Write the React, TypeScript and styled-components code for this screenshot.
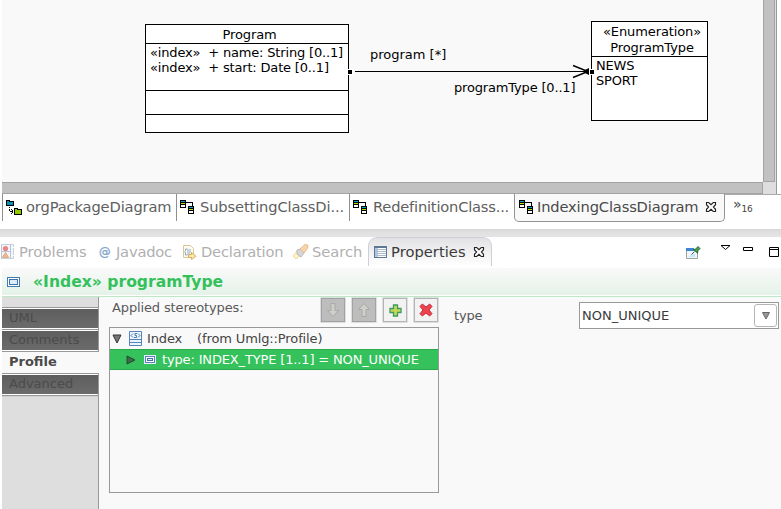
import React from "react";
import styled, { createGlobalStyle, css } from "styled-components";

const GlobalStyle = createGlobalStyle`
  * { box-sizing: border-box; }
  body {
    margin: 0;
    background: #fff;
    font-family: "DejaVu Sans", sans-serif;
    font-size: 13px;
    overflow: hidden;
  }
  svg { display: block; flex: none; }
`;

const Window = styled.div`
  width: 781px;
  height: 509px;
  overflow: hidden;
  display: flex;
  flex-direction: column;
`;

/* ---------- Diagram editor ---------- */

const Editor = styled.section`
  display: grid;
  grid-template-columns: 761px 12px;
  grid-template-rows: 182px 12px;
  width: 776px;
  margin-left: 2px;
  height: 194px;
`;

const Canvas = styled.div`
  position: relative;
  background: #f9f9f9;
  overflow: hidden;
`;

const VerticalTrack = styled.div`
  background: #c1c1c1;
  border: solid #a3a3a3;
  border-width: 0 1px 1px 1px;
  box-shadow: 1px 0 #dedede, 2px 0 #999;
`;

const HorizontalTrack = styled.div`
  background: #c1c1c1;
  border: solid #a3a3a3;
  border-width: 1px 1px 1px 0;
`;

const TrackCorner = styled.div`
  background: #dedede;
  box-shadow: 1px 0 #dedede, 2px 0 #999;
`;

const ClassNode = styled.div<{ $x: number; $y: number; $w: number; $h: number }>`
  position: absolute;
  left: ${(p) => p.$x}px;
  top: ${(p) => p.$y}px;
  width: ${(p) => p.$w}px;
  height: ${(p) => p.$h}px;
  display: flex;
  flex-direction: column;
  background: #fff;
  border: 1px solid #000;
`;

const NodeTitle = styled.div<{ $h: number; $line: number; $indent: number }>`
  height: ${(p) => p.$h}px;
  padding: ${(p) => p.$h > 20 ? 2 : 1}px 0 0 ${(p) => p.$indent}px;
  line-height: ${(p) => p.$line}px;
  letter-spacing: -0.1px;
  text-align: center;
  white-space: pre;
`;

const Compartment = styled.div<{ $h: number }>`
  height: ${(p) => p.$h}px;
  padding: 1px 0 0 4px;
  border-top: 1px solid #000;
  line-height: 15px;
  white-space: pre;
`;

const Member = styled.div<{ $spacing?: number }>`
  letter-spacing: ${(p) => p.$spacing ?? 0}px;
`;

const EdgeLabel = styled.span<{ $x: number; $y: number; $spacing?: number }>`
  position: absolute;
  left: ${(p) => p.$x}px;
  top: ${(p) => p.$y}px;
  line-height: 16px;
  white-space: pre;
  letter-spacing: ${(p) => p.$spacing ?? 0}px;
`;

const Edge = styled.svg`
  position: absolute;
  left: 344px;
  top: 60px;
`;

/* ---------- Editor tabs ---------- */

const EditorTabs = styled.nav`
  display: flex;
  height: 35px;
  margin-left: 2px;
  flex: none;
`;

const EditorTab = styled.div<{ $w: number; $gap?: number; $active?: boolean }>`
  display: flex;
  align-items: center;
  width: ${(p) => p.$w}px;
  height: 27px;
  padding: 0 0 1px 3px;
  gap: ${(p) => p.$gap ?? 5}px;
  border-left: 1px solid #8f8f8f;
  color: #606060;
  ${(p) =>
    p.$active &&
    css`
      height: 28px;
      padding-left: 4px;
      gap: 3px;
      color: #4a4a4a;
      background: #f9f9f9;
      border: solid #939393;
      border-width: 0 1px 1px 1px;
      border-radius: 0 0 5px 5px;
    `}
`;

const TabText = styled.span<{ $spacing?: number }>`
  font-size: 14.67px;
  line-height: 18px;
  white-space: pre;
  letter-spacing: ${(p) => p.$spacing ?? 0}px;
`;

const Overflow = styled.div`
  display: flex;
  flex: 1;
  padding: 4px 0 0 8px;
  border-top: 1px solid #aaa;
  color: #444;
  font-size: 14px;
  line-height: 10px;
`;

const OverflowCount = styled.span`
  font-size: 9px;
  line-height: 20px;
  letter-spacing: -0.2px;
`;

const Sash = styled.div`
  height: 8px;
  flex: none;
  background: linear-gradient(#d7d7d7, #e0e0e0 40%, #e4e4e4);
`;

/* ---------- View tabs ---------- */

const ViewTabs = styled.nav`
  display: flex;
  align-items: flex-start;
  height: 31px;
  flex: none;
`;

const ViewTab = styled.div<{ $w: number; $gap?: number; $active?: boolean }>`
  display: flex;
  align-items: center;
  gap: ${(p) => p.$gap ?? 4}px;
  width: ${(p) => p.$w}px;
  height: 29px;
  color: #b0b0b0;
  ${(p) =>
    p.$active &&
    css`
      padding-left: 5px;
      gap: 4px;
      color: #3a3a3a;
      background: linear-gradient(#e2e2e4, #fff);
      border: solid #cfcfdb;
      border-width: 1px 1px 0;
      border-radius: 9px 9px 0 0;
    `}
`;

const CloseSlot = styled.span`
  margin-left: 3px;
`;

const ViewTools = styled.div`
  display: flex;
  align-items: flex-start;
  flex: 1;
  height: 31px;
  padding: 6px 2px 0 0;
  justify-content: flex-end;
`;

const Tool = styled.div<{ $left: number; $top: number }>`
  margin: ${(p) => p.$top}px 0 0 ${(p) => p.$left}px;
`;

/* ---------- Properties view ---------- */

const Heading = styled.header`
  display: flex;
  align-items: center;
  gap: 13px;
  height: 29px;
  flex: none;
  margin-left: 2px;
  padding: 0 0 1px 5px;
  background: linear-gradient(#fafafa, #e4f2e8 93%, #fff 93%, #fff 96.5%, #bde7c7 96.5%);
  color: #34c15c;
  font-size: 15.6px;
  font-weight: bold;
`;

const HeadingText = styled.span`
  white-space: pre;
`;

const Body = styled.div`
  display: flex;
  flex: 1;
  margin-left: 2px;
  background: #f9f9f9;
`;

const Sections = styled.aside`
  width: 97px;
  padding-top: 10px;
  background: #dedede;
  border-right: 1px solid #999;
`;

const Section = styled.div<{ $active?: boolean }>`
  height: 22px;
  padding-left: 7px;
  border-top: 1px solid #999;
  line-height: 20px;
  color: #4b4b4b;
  background: linear-gradient(#fff 1px, #5e5e5e 1px, #6b6b6b 20px, #fff 20px);
  ${(p) =>
    p.$active &&
    css`
      width: 97px;
      border-top-color: #999;
      background: #f9f9f9;
      font-weight: bold;
      color: #4a4a4a;
    `}
`;

const SectionsEnd = styled.div`
  height: 2px;
  background: linear-gradient(#999 1px, #d0d0d0 1px);
`;

const Stereotypes = styled.div`
  width: 330px;
  margin-left: 10px;
  display: flex;
  flex-direction: column;
`;

const StereotypeBar = styled.div`
  display: flex;
  height: 30px;
  padding: 0 0 0 3px;
  justify-content: space-between;
  color: #5a5a5a;
`;

const BarLabel = styled.span`
  line-height: 21px;
  letter-spacing: -0.13px;
  white-space: nowrap;
`;

const Buttons = styled.div`
  display: flex;
  gap: 5px;
`;

const ToolButton = styled.button<{ $disabled?: boolean }>`
  display: flex;
  align-items: center;
  justify-content: center;
  width: 26px;
  height: 26px;
  padding: 0;
  border: 1px solid #dedede;
  border-radius: 1px;
  box-shadow: inset 0 0 0 1px ${(p) => (p.$disabled ? "#a2a2a2" : "#b5b5b5")};
  background: ${(p) => (p.$disabled ? "#bdbdbd" : "#f2f2f2")};
`;

const Tree = styled.div`
  height: 166px;
  border: 1px solid #999;
  color: #444;
`;

const TreeRow = styled.div<{ $selected?: boolean }>`
  display: flex;
  align-items: center;
  height: 21px;
  padding-left: 2px;
  white-space: pre;
  ${(p) =>
    p.$selected &&
    css`
      padding-left: 16px;
      color: #fff;
      background: #35c15b;
      border: solid #27a94c;
      border-width: 1px 0;
    `}
`;

const TreeText = styled.span<{ $left: number; $spacing?: number }>`
  margin-left: ${(p) => p.$left}px;
  letter-spacing: ${(p) => p.$spacing ?? 0}px;
`;

const Field = styled.div`
  display: flex;
  flex: 1;
  padding: 5px 0 0 15px;
`;

const FieldLabel = styled.label`
  width: 125px;
  color: #555;
  line-height: 27px;
  letter-spacing: -0.2px;
`;

const Combo = styled.div`
  display: flex;
  align-items: center;
  justify-content: space-between;
  width: 200px;
  height: 27px;
  padding: 0 1px 0 2px;
  border: 1px solid #999;
  background: #fff;
  color: #3a3a3a;
`;

const ComboButton = styled.div`
  display: flex;
  align-items: center;
  justify-content: center;
  width: 23px;
  height: 23px;
  border: 1px solid #b5b5b5;
  border-radius: 3px;
`;

/* ---------- Icons ---------- */

const ClassDiagramIcon = () => (
  <svg width="15" height="15" shapeRendering="crispEdges">
    <path d="M6 2h7v4h-1V3H6z" fill="#000" />
    {[[0, 0], [8, 6]].map(([x, y]) => (
      <g key={x} transform={`translate(${x} ${y})`}>
        <rect width="6" height="8" />
        <rect x="1" y="1" width="4" height="1" fill="#0aa5c5" />
        <rect x="1" y="3" width="4" height="1" fill="#b0e000" />
        <rect x="1" y="5" width="4" height="2" fill="#fff" />
      </g>
    ))}
  </svg>
);

const PackageDiagramIcon = () => (
  <svg width="16" height="15" shapeRendering="crispEdges">
    <path d="M0 0h4v1h4v5H0z" />
    <path d="M1 1h2v1h4v3H1z" fill="#0a91b5" />
    <path d="M8 8h4v1h4v6H8z" />
    <path d="M9 9h2v1h4v4H9z" fill="#93c900" />
    <path d="M3 7h1v1H3zM3 9h1v2H3zM4 11h3v1H4zM5 9h1v1H5zM6 10h1v1H6zM6 12h1v1H6zM5 13h1v1H5z" />
  </svg>
);

const CloseIcon = () => (
  <svg width="12" height="12" viewBox="0 0 12 12">
    <path
      d="M1.5 1.5h2.2L6 3.6l2.3-2.1h2.2v2.2L8.4 6l2.1 2.3v2.2H8.3L6 8.4l-2.3 2.1H1.5V8.3L3.6 6 1.5 3.7z"
      fill="#fff"
      stroke="#222"
      strokeWidth="1.15"
    />
  </svg>
);

const ProblemsIcon = () => (
  <svg width="15" height="16">
    <path d="M1.5 .5h12v14h-12z" fill="#f4f6fa" stroke="#c5d0e0" />
    <path d="M1.5 .5v14M10.5 .5v14M1 7.5h10" stroke="#b8c5d8" />
    <circle cx="5.5" cy="4.5" r="2.6" fill="#e98488" />
    <path d="M5.5 8.5l3.2 5H2.3z" fill="#f0b58c" stroke="#dfad84" />
    <path d="M12 3.5h2M12 11.5h2" stroke="#fff" />
  </svg>
);

const DeclarationIcon = () => (
  <svg width="15" height="16">
    <path d="M1.5 1.5h7l3 3v9h-10z" fill="#fffdf2" stroke="#dcc698" />
    <path d="M5.5 5h-2v2l-1 .8 1 .8V11h2M5 8h4M5 6h4M5 10h3" stroke="#8faccc" fill="none" />
    <path d="M6.5 10.5h3v-2l4.5 3.7-4.5 3.3v-2h-3z" fill="#ffe9a8" stroke="#d4ae68" />
  </svg>
);

const SearchIcon = () => (
  <svg width="17" height="16">
    <path d="M1 12l4-5 4 4-5 4z" fill="#fff3c4" stroke="#efdca4" />
    <path d="M5 6l3-1 4 4-3 4-4-3z" fill="#d5d5da" stroke="#b8b8c0" />
    <path d="M8 5l5-4.5 3 .8-.5 3L12 9z" fill="#f7d5ac" stroke="#e5bb8c" />
  </svg>
);

const PropertiesIcon = () => (
  <svg width="13" height="12" shapeRendering="crispEdges">
    <rect width="13" height="12" fill="#5e7893" />
    <rect x="1" y="2" width="11" height="9" fill="#fff" />
    <rect x="1" y="2" width="3" height="9" fill="#b5cbe4" />
    <path d="M1 3h11v1H1zM1 5h11v1H1zM1 7h11v1H1zM1 9h11v1H1z" fill="#a9bccf" />
  </svg>
);

const PinIcon = () => (
  <svg width="15" height="14">
    <path d="M.5 3.5h11v9H.5z" fill="#eef7ff" stroke="#9aa891" />
    <path d="M0 2h8v3H0z" fill="#3f86d2" />
    <path d="M2 11l7-4v4z" fill="#cae4fb" />
    <path d="M5.5 8.5l3-3" stroke="#555" />
    <path d="M7.5 3.5l2-.3L12 .5l2 2-2.2 2.4-.3 2.3z" fill="#48a34c" stroke="#286d35" />
  </svg>
);

const AttributeIcon = ({ light }: { light?: boolean }) => (
  <svg width={light ? 12 : 13} height={light ? 9 : 10} viewBox="0 0 13 10" preserveAspectRatio="none" shapeRendering="crispEdges">
    <rect width="13" height="10" fill={light ? "#e6f0f8" : "#3f7cb5"} />
    <rect x="1" y="1" width="11" height="8" fill={light ? "#5c7fbe" : "#fff"} />
    <rect x="2" y="2" width="9" height="6" fill={light ? "#fff" : "#3f73ae"} />
    <rect x="3" y="3" width="7" height="4" fill={light ? "#3f6fae" : "#dcecfa"} />
    {light && <rect x="4" y="4" width="5" height="2" fill="#e6f0f8" />}
  </svg>
);

const StereotypeIcon = () => (
  <svg width="13" height="15">
    <path d="M.5 .5h12v14H.5z" fill="#eaf5ff" stroke="#5585b8" />
    <path d="M0 8.500h13M0 11.500h13" stroke="#5585b8" />
    <path d="M4 2.500L2 4.500l2 2M9 2.500l2 2-2 2M8 2.500H6v2h1.500v2H5" stroke="#3c719f" strokeWidth=".9" fill="none" />
  </svg>
);

const ArrowIcon = ({ up }: { up?: boolean }) => (
  <svg width="14" height="16">
    <path
      d="M5 1.5h4v7h3.5L7 14.5 1.5 8.5H5z"
      fill="#cfcfca"
      stroke="#a9a9a5"
      transform={up ? "rotate(180 7 8)" : undefined}
    />
  </svg>
);

const AddIcon = () => (
  <svg width="13" height="13">
    <path d="M4.5 1h4v3.500H12v4H8.500V12h-4V8.500H1v-4h3.500z" fill="#c6da57" stroke="#3e9a61" strokeWidth="1.3" />
  </svg>
);

const RemoveIcon = () => (
  <svg width="14" height="14">
    <path d="M3.3 1L7 4 10.7 1 13 3.4 10 7l3 3.7-2.300 2.300L7 10l-3.700 3L1 10.700 4 7 1 3.400z" fill="#ed4350" stroke="#c82b36" />
  </svg>
);

const App = () => (
  <>
    <GlobalStyle />
    <Window>
      <Editor>
        <Canvas>
          <ClassNode $x={143} $y={24} $w={204} $h={109}>
            <NodeTitle $h={18} $line={17} $indent={5}>Program</NodeTitle>
            <Compartment $h={47}>
              <Member $spacing={-0.17}>«index»  + name: String [0..1]</Member>
              <Member $spacing={-0.17}>«index»  + start: Date [0..1]</Member>
            </Compartment>
            <Compartment $h={24} />
            <Compartment $h={18} />
          </ClassNode>
          <ClassNode $x={589} $y={21} $w={117} $h={100}>
            <NodeTitle $h={34} $line={16} $indent={1}>{" «Enumeration»\n ProgramType"}</NodeTitle>
            <Compartment $h={64}>
              <Member $spacing={-0.2}>NEWS</Member>
              <Member $spacing={-0.2}>SPORT</Member>
            </Compartment>
          </ClassNode>
          <EdgeLabel $x={368} $y={47}>program [*]</EdgeLabel>
          <EdgeLabel $x={452} $y={80} $spacing={-0.17}>programType [0..1]</EdgeLabel>
          <Edge width="252" height="24">
            <path d="M9 11.5h234" stroke="#000" />
            <path d="M227 5.5l15 6-15 6" stroke="#000" strokeWidth="1.4" fill="none" />
            <path d="M236 11.500l7-3.500v7z" />
            <path d="M1 9h6v6H1zM243 9h6v6h-6z" fill="#fff" />
            <path d="M2 10h4v4H2zM244 10h4v4h-4z" shapeRendering="crispEdges" />
          </Edge>
        </Canvas>
        <VerticalTrack />
        <HorizontalTrack />
        <TrackCorner />
      </Editor>

      <EditorTabs>
        <EditorTab $w={174} $gap={4}>
          <PackageDiagramIcon />
          <TabText $spacing={-0.13}>orgPackageDiagram</TabText>
        </EditorTab>
        <EditorTab $w={173}>
          <ClassDiagramIcon />
          <TabText $spacing={-0.13}>SubsettingClassDi...</TabText>
        </EditorTab>
        <EditorTab $w={165}>
          <ClassDiagramIcon />
          <TabText $spacing={-0.2}>RedefinitionClass...</TabText>
        </EditorTab>
        <EditorTab $w={211} $active>
          <ClassDiagramIcon />
          <TabText $spacing={-0.15}>IndexingClassDiagram</TabText>
          <CloseSlot><CloseIcon /></CloseSlot>
        </EditorTab>
        <Overflow>
          »<OverflowCount>16</OverflowCount>
        </Overflow>
      </EditorTabs>

      <Sash />

      <ViewTabs>
        <ViewTab $w={98}>
          <ProblemsIcon />
          <TabText>Problems</TabText>
        </ViewTab>
        <ViewTab $w={84} $gap={5}>
          <svg width="13" height="16">
            <text x="1" y="12" fontSize="11.500" fill="#7fa6cd" stroke="#7fa6cd" strokeWidth=".3">@</text>
          </svg>
          <TabText $spacing={-0.2}>Javadoc</TabText>
        </ViewTab>
        <ViewTab $w={110}>
          <DeclarationIcon />
          <TabText $spacing={-0.2}>Declaration</TabText>
        </ViewTab>
        <ViewTab $w={76} $gap={3}>
          <SearchIcon />
          <TabText>Search</TabText>
        </ViewTab>
        <ViewTab $w={124} $active>
          <PropertiesIcon />
          <TabText $spacing={0.05}>Properties</TabText>
          <CloseSlot><CloseIcon /></CloseSlot>
        </ViewTab>
        <ViewTools>
          <Tool $left={0} $top={3}><PinIcon /></Tool>
          <Tool $left={19} $top={1}>
            <svg width="11" height="7"><path d="M1 1.5h9L5.500 5.500z" fill="#fff" stroke="#000" /></svg>
          </Tool>
          <Tool $left={12} $top={4}>
            <svg width="10" height="4"><path d="M.5 .5h9v3h-9z" fill="#fff" stroke="#000" /></svg>
          </Tool>
          <Tool $left={16} $top={4}>
            <svg width="10" height="10"><path d="M.5 .5h9v9h-9zM0 2.500h10" fill="#fff" stroke="#000" /></svg>
          </Tool>
        </ViewTools>
      </ViewTabs>

      <Heading>
        <AttributeIcon />
        <HeadingText>«Index» programType</HeadingText>
      </Heading>

      <Body>
        <Sections>
          <Section>UML</Section>
          <Section>Comments</Section>
          <Section $active>Profile</Section>
          <Section>Advanced</Section>
          <SectionsEnd />
        </Sections>
        <Stereotypes>
          <StereotypeBar>
            <BarLabel>Applied stereotypes:</BarLabel>
            <Buttons>
              <ToolButton $disabled><ArrowIcon /></ToolButton>
              <ToolButton $disabled><ArrowIcon up /></ToolButton>
              <ToolButton><AddIcon /></ToolButton>
              <ToolButton><RemoveIcon /></ToolButton>
            </Buttons>
          </StereotypeBar>
          <Tree>
            <TreeRow>
              <svg width="10" height="10"><path d="M1 1h8L5 9z" fill="#777" stroke="#333" /></svg>
              <TreeText $left={7}><StereotypeIcon /></TreeText>
              <TreeText $left={5} $spacing={-0.15}>Index</TreeText>
              <TreeText $left={15} $spacing={-0.12}>(from Umlg::Profile)</TreeText>
            </TreeRow>
            <TreeRow $selected>
              <svg width="10" height="10"><path d="M1 1v8L9 5z" fill="#3d6b4a" stroke="#244a30" /></svg>
              <TreeText $left={8}><AttributeIcon light /></TreeText>
              <TreeText $left={6} $spacing={-0.15}>type: INDEX_TYPE [1..1] = NON_UNIQUE</TreeText>
            </TreeRow>
          </Tree>
        </Stereotypes>
        <Field>
          <FieldLabel>type</FieldLabel>
          <Combo>
            NON_UNIQUE
            <ComboButton>
              <svg width="8" height="8"><path d="M.5 .5h7L4 7z" fill="#999" stroke="#666" /></svg>
            </ComboButton>
          </Combo>
        </Field>
      </Body>
    </Window>
  </>
);

export default App;
